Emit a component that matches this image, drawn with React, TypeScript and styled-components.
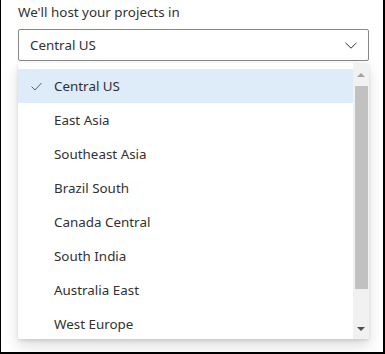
import React from 'react';
import styled, { createGlobalStyle } from 'styled-components';

const GlobalStyle = createGlobalStyle`
  body {
    margin: 0;
    background: #ffffff;
    font-family: "Segoe UI", "Noto Sans", "Open Sans", sans-serif;
  }
`;

const Frame = styled.div`
  width: 385px;
  height: 354px;
  box-sizing: border-box;
  border-left: 1px solid #000;
  border-right: 2px solid #000;
  border-bottom: 2px solid #000;
  padding: 2px 14px 0 17px;
  background: #fff;
  overflow: hidden;
`;

const Label = styled.div`
  font-size: 13.4px;
  line-height: 20px;
  color: #323130;
  margin-bottom: 7px;
`;

const Field = styled.div`
  height: 32px;
  box-sizing: border-box;
  border: 1px solid #8a8886;
  border-radius: 2px;
  display: flex;
  align-items: center;
  justify-content: space-between;
  padding: 0 11px 0 11px;
  font-size: 13.4px;
  color: #323130;
`;

const Callout = styled.div`
  margin-top: 2px;
  height: 276px;
  display: flex;
  background: #fff;
  box-shadow: 0 6.4px 14.4px 0 rgba(0, 0, 0, 0.132), 0 1.2px 3.6px 0 rgba(0, 0, 0, 0.108);
  border-radius: 2px;
  overflow: hidden;
`;

const Options = styled.div`
  flex: 1;
  padding-top: 6px;
  overflow: hidden;
`;

const Option = styled.div<{ $selected?: boolean }>`
  height: 34px;
  display: flex;
  align-items: center;
  font-size: 13.4px;
  color: #323130;
  background: ${(p) => (p.$selected ? '#deecf9' : 'transparent')};
`;

const CheckSlot = styled.span`
  width: 36px;
  display: flex;
  justify-content: flex-start;
  padding-left: 13px;
  box-sizing: border-box;
`;

const Scrollbar = styled.div`
  width: 16px;
  background: #f1f1f1;
  display: flex;
  flex-direction: column;
  align-items: center;
`;

const Arrow = styled.div<{ $down?: boolean; $dim?: boolean }>`
  height: 23px;
  display: flex;
  align-items: ${(p) => (p.$down ? 'flex-end' : 'center')};
  padding-bottom: ${(p) => (p.$down ? '8px' : '0')};
  &::before {
    content: '';
    width: 0;
    height: 0;
    border-left: 4px solid transparent;
    border-right: 4px solid transparent;
    ${(p) =>
      p.$down
        ? `border-top: 4px solid ${p.$dim ? '#a3a3a3' : '#505050'};`
        : `border-bottom: 4px solid ${p.$dim ? '#a3a3a3' : '#505050'};`}
  }
`;

const Thumb = styled.div`
  width: 13px;
  height: 203px;
  background: #c1c1c1;
`;

const Spacer = styled.div`
  flex: 1;
`;

const regions = [
  'Central US',
  'East Asia',
  'Southeast Asia',
  'Brazil South',
  'Canada Central',
  'South India',
  'Australia East',
  'West Europe',
];

function Chevron() {
  return (
    <svg width="12" height="7" viewBox="0 0 12 7">
      <path d="M0.5 0.8 L6 6.2 L11.5 0.8" fill="none" stroke="#323130" strokeWidth="1" />
    </svg>
  );
}

function Check() {
  return (
    <svg width="11" height="9" viewBox="0 0 11 9">
      <path d="M0.5 4.5 L4 8 L10.5 1" fill="none" stroke="#605e5c" strokeWidth="1" />
    </svg>
  );
}

export default function App() {
  return (
    <>
      <GlobalStyle />
      <Frame>
        <Label>We'll host your projects in</Label>
        <Field>
          <span>Central US</span>
          <Chevron />
        </Field>
        <Callout>
          <Options>
            {regions.map((name, i) => (
              <Option key={name} $selected={i === 0}>
                <CheckSlot>{i === 0 && <Check />}</CheckSlot>
                {name}
              </Option>
            ))}
          </Options>
          <Scrollbar>
            <Arrow $dim />
            <Thumb />
            <Spacer />
            <Arrow $down />
          </Scrollbar>
        </Callout>
      </Frame>
    </>
  );
}
